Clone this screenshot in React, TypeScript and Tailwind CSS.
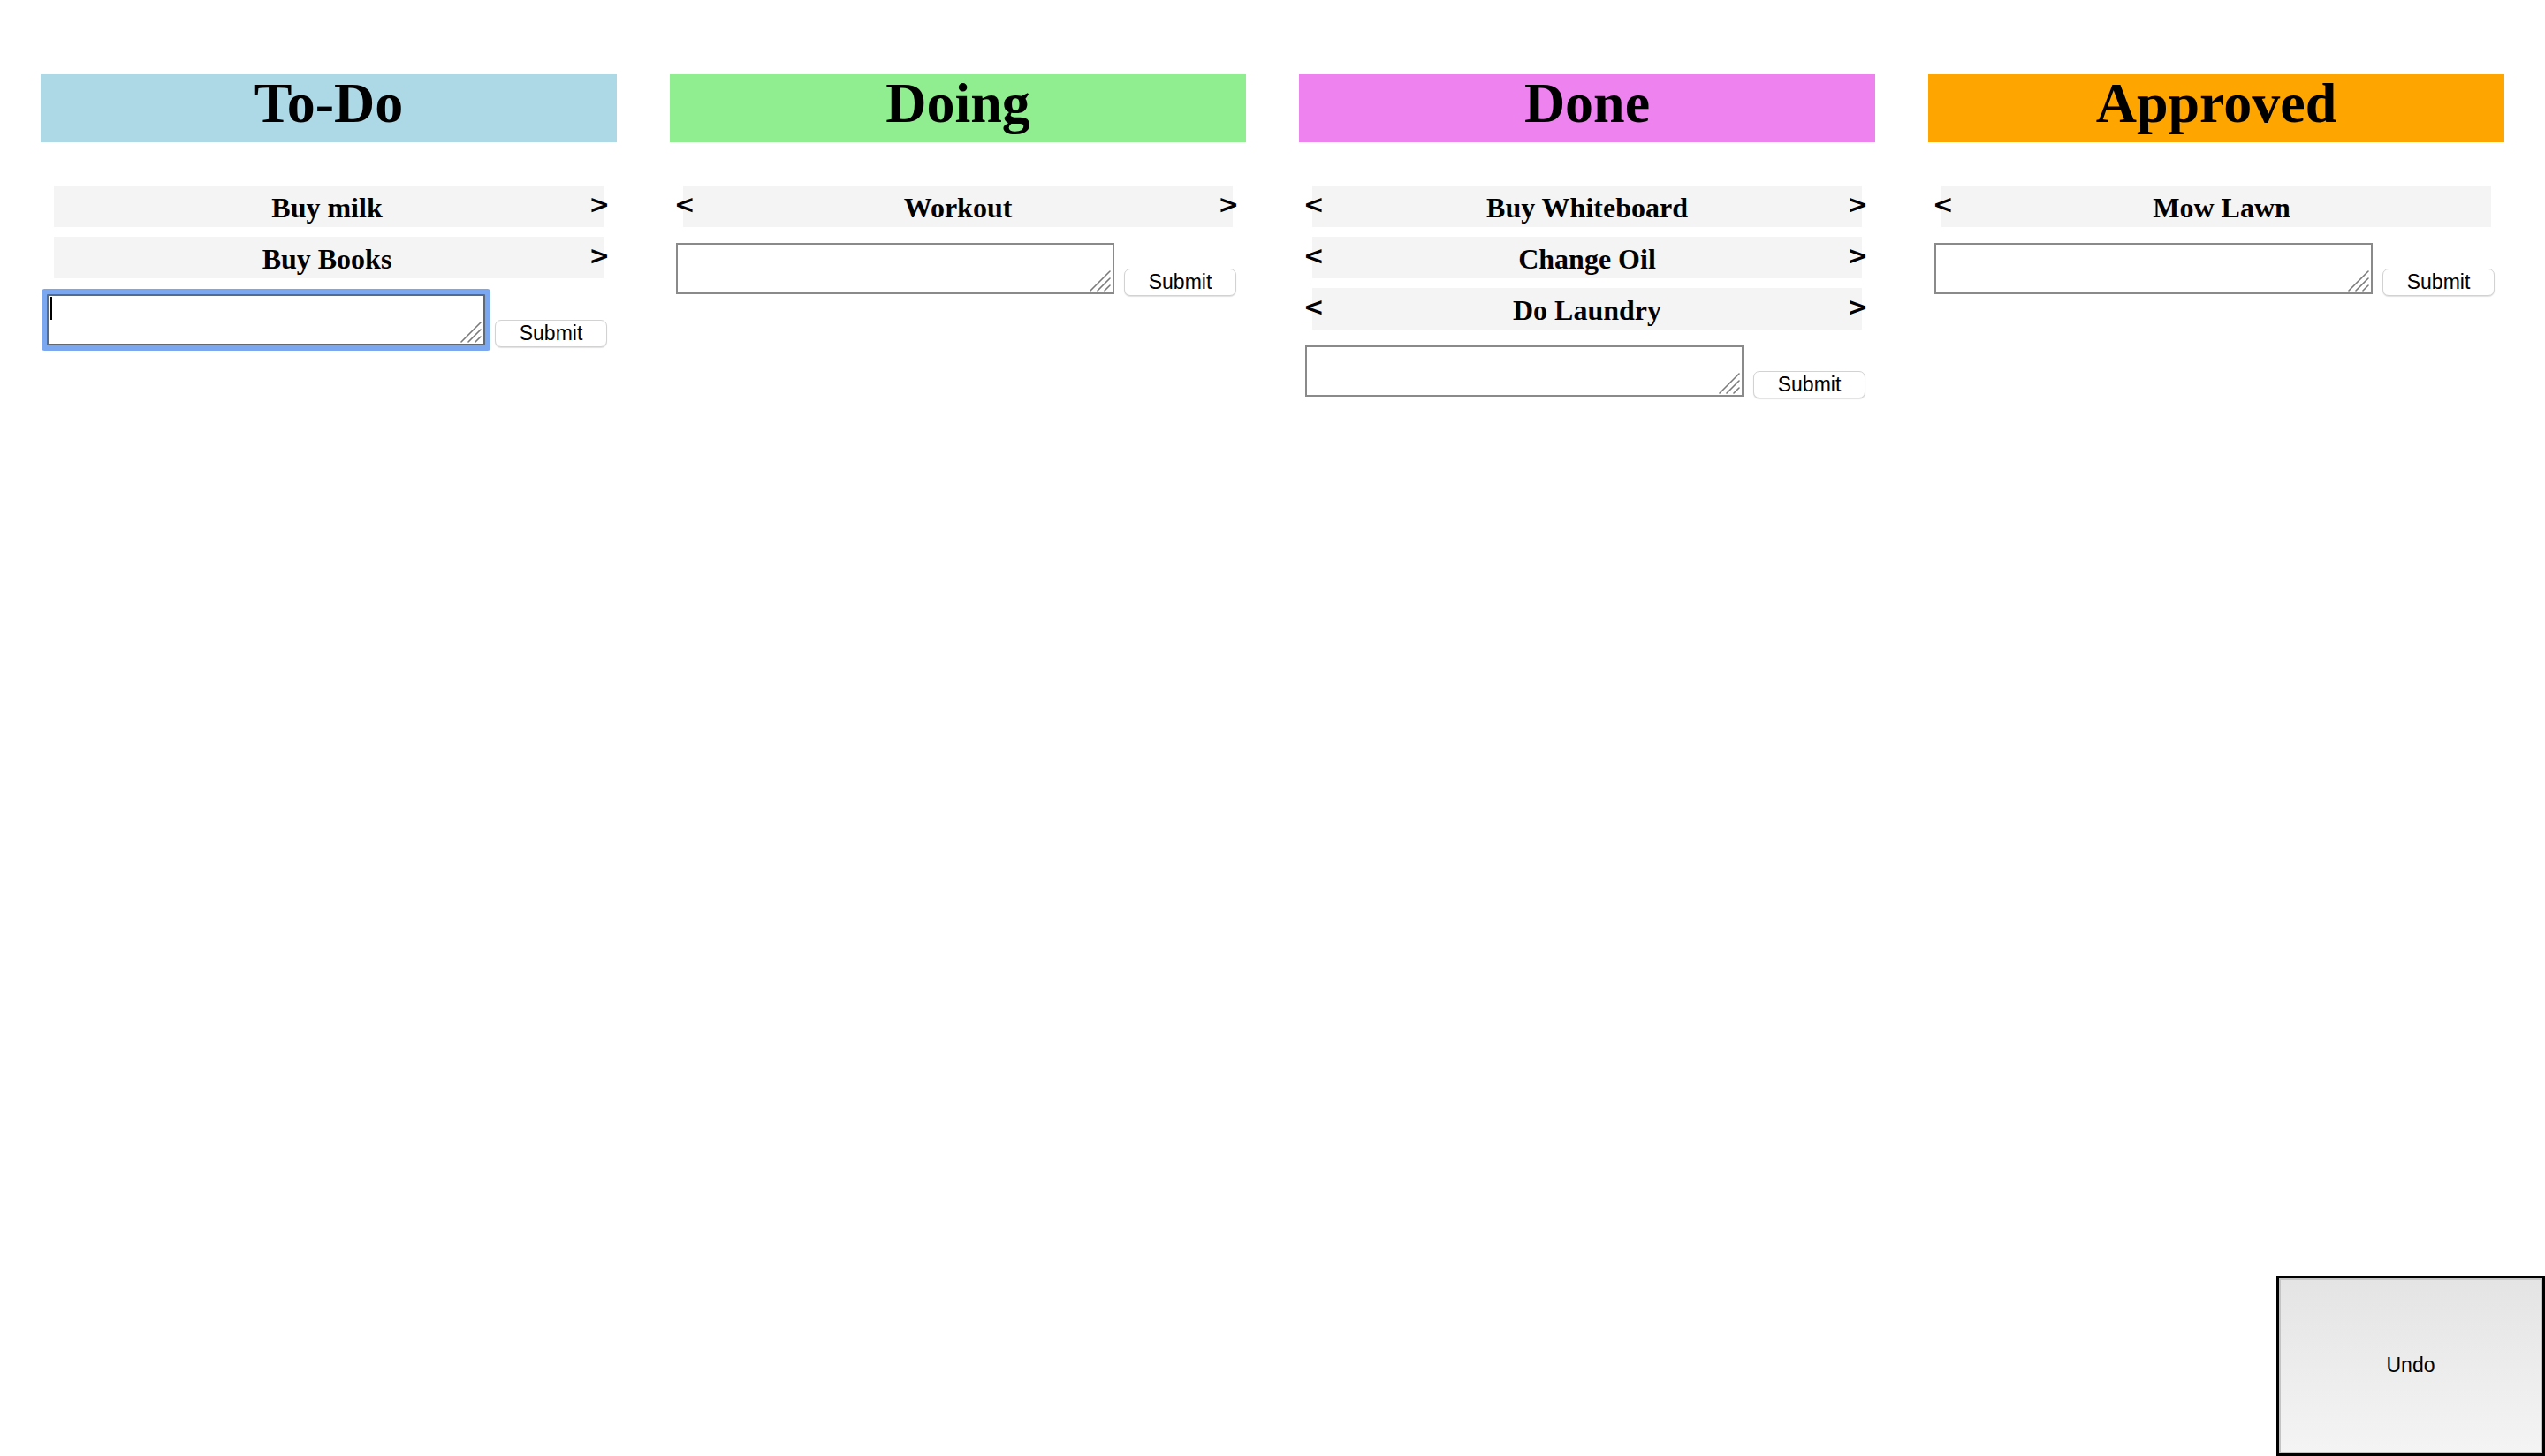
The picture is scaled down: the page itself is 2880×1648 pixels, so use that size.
import React from "react";

type Column = {
  title: string;
  color: string;
  items: string[];
  canLeft: boolean;
  canRight: boolean;
  focused?: boolean;
};

const columns: Column[] = [
  { title: "To-Do", color: "bg-[#add8e6]", items: ["Buy milk", "Buy Books"], canLeft: false, canRight: true, focused: true },
  { title: "Doing", color: "bg-[#90ee90]", items: ["Workout"], canLeft: true, canRight: true },
  { title: "Done", color: "bg-[#ee82ee]", items: ["Buy Whiteboard", "Change Oil", "Do Laundry"], canLeft: true, canRight: true },
  { title: "Approved", color: "bg-[#ffa500]", items: ["Mow Lawn"], canLeft: true, canRight: false },
];

function Card({ name, canLeft, canRight }: { name: string; canLeft: boolean; canRight: boolean }) {
  // text sits a little off-centre when only one arrow is shown
  const shift = !canLeft ? "pr-[4px]" : !canRight ? "pl-[12px]" : "";
  return (
    <div
      className={`relative mx-[15px] h-[47px] bg-[#f4f4f4] pt-[2px] text-center font-['Liberation_Serif',serif] text-[32px] font-bold leading-[47px] text-black ${shift}`}
    >
      {/* move left */}
      {canLeft && (
        <button className="absolute left-[-10px] top-[-2px] flex h-full items-center font-['DejaVu_Sans',sans-serif] text-[28px] font-bold leading-none text-black">
          &lt;
        </button>
      )}
      {name}
      {/* move right */}
      {canRight && (
        <button className="absolute right-[-7px] top-[-2px] flex h-full items-center font-['DejaVu_Sans',sans-serif] text-[28px] font-bold leading-none text-black">
          &gt;
        </button>
      )}
    </div>
  );
}

function AddForm({ focused }: { focused?: boolean }) {
  return (
    <div className="mt-[18px] flex items-end pl-[7px]">
      <div className="relative">
        <textarea
          className={
            focused
              ? "block h-[58px] w-[496px] resize-none rounded-[1px] border-2 border-[#5d6a7c] bg-white ring-[6px] ring-[#7aa7f0] outline-none"
              : "block h-[58px] w-[496px] resize-none border-2 border-[#8a8a8a] bg-white outline-none"
          }
        />
        {/* caret */}
        {focused && <div className="absolute left-[4px] top-[3px] h-[26px] w-[2px] bg-black" />}
        {/* resize grip */}
        <svg
          className="pointer-events-none absolute bottom-[3px] right-[4px]"
          width="24"
          height="24"
          viewBox="0 0 24 24"
        >
          <g stroke="#7a7a7a" strokeWidth="1.6" strokeLinecap="round">
            <line x1="1" y1="23" x2="23" y2="1" />
            <line x1="9" y1="23" x2="23" y2="9" />
            <line x1="17" y1="23" x2="23" y2="17" />
          </g>
        </svg>
      </div>
      <button className="mb-[-2px] ml-[11px] h-[31px] w-[127px] rounded-[7px] border border-[#d2d2d2] bg-white font-['Liberation_Sans',Arial,sans-serif] text-[23px] leading-none text-black shadow-[0_1px_1px_rgba(0,0,0,0.12)]">
        Submit
      </button>
    </div>
  );
}

export default function App() {
  return (
    <div className="min-h-[1648px] w-full bg-white">
      <div className="grid grid-cols-4 gap-[60px] px-[46px] pt-[84px]">
        {columns.map((col) => (
          <div key={col.title}>
            {/* column title */}
            <div
              className={`${col.color} h-[77px] text-center font-['Liberation_Serif',serif] text-[64px] font-bold leading-[66px] text-black`}
            >
              {col.title}
            </div>

            {/* cards */}
            <div className="mt-[49px] flex flex-col gap-[11px]">
              {col.items.map((item) => (
                <Card key={item} name={item} canLeft={col.canLeft} canRight={col.canRight} />
              ))}
            </div>

            <AddForm focused={col.focused} />
          </div>
        ))}
      </div>

      {/* undo */}
      <button className="fixed bottom-0 right-0 h-[204px] w-[304px] border-[3px] border-black bg-gradient-to-b from-[#e4e4e4] to-[#f4f4f4] pb-[2px] font-['Liberation_Sans',Arial,sans-serif] text-[23px] text-black shadow-[inset_0_0_0_2px_#c4c4c4]">
        Undo
      </button>
    </div>
  );
}
